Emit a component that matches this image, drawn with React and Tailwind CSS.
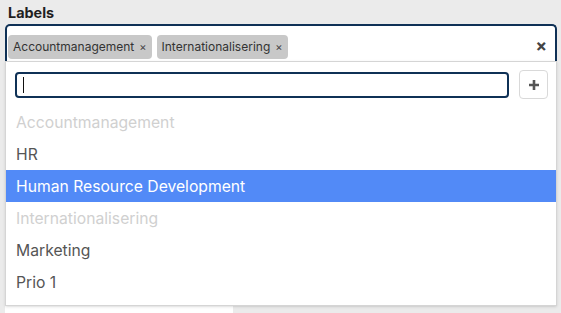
import React from 'react';

const options = [
  { label: 'Accountmanagement', disabled: true },
  { label: 'HR' },
  { label: 'Human Resource Development', active: true },
  { label: 'Internationalisering', disabled: true },
  { label: 'Marketing' },
  { label: 'Prio 1' },
];

const Tag = ({ label }) => (
  <span className="flex items-center h-[24px] px-[5px] rounded-[4px] bg-[#c8c8c8] text-[12px] text-[#333] mr-[5px]">
    {label}
    <span className="ml-[5px] text-[11px] text-[#444]">×</span>
  </span>
);

export default function App() {
  return (
    <div className="w-[561px] h-[313px] bg-[#ebebeb] overflow-hidden pt-[3px] px-[5px] font-['Inter',sans-serif]">
      <div className="h-[19px] leading-[19px] text-[14.4px] font-bold text-[#1f1f1f] pl-[3px]">Labels</div>

      <div className="relative mt-[2px] w-[552px]">
        {/* Select box */}
        <div className="h-[37px] border-2 border-b-0 border-[#0f3156] rounded-t-[5px] bg-white flex items-end pb-[2px] pl-[1px]">
          <Tag label="Accountmanagement" />
          <Tag label="Internationalisering" />
          <span className="ml-auto mr-[8px] mb-[4px] text-[17px] leading-none font-bold text-[#444]">×</span>
        </div>

        {/* Dropdown menu */}
        <div className="absolute left-0 right-0 top-full h-[245px] border border-[#d5d5d5] bg-white shadow-sm z-10">
          <div className="flex items-center pt-[8px] pl-[9px] pr-[8px]">
            <div className="flex-1 h-[26px] border-2 border-[#0f3156] rounded-[4px] flex items-center pl-[6px]">
              <span className="w-px h-[16px] bg-[#111]" />
            </div>
            <button className="ml-[10px] w-[29px] h-[29px] border border-[#d9d9d9] rounded-[4px] flex items-center justify-center">
              <svg width="12" height="12" viewBox="0 0 12 12">
                <path d="M6 1v10M1 6h10" stroke="#555" strokeWidth="2.6" />
              </svg>
            </button>
          </div>
          <ul className="mt-[7px]">
            {options.map((o) => (
              <li
                key={o.label}
                className={`h-[32px] flex items-center pl-[10px] pt-[1px] text-[15.7px] ${
                  o.active ? 'bg-[#528af7] text-white' : o.disabled ? 'text-[#d0d0d0]' : 'text-[#555]'
                }`}
              >
                {o.label}
              </li>
            ))}
          </ul>
        </div>
      </div>

      {/* Field underneath the menu */}
      <div className="mt-[200px] w-[228px] h-[100px] bg-white" />
    </div>
  );
}
